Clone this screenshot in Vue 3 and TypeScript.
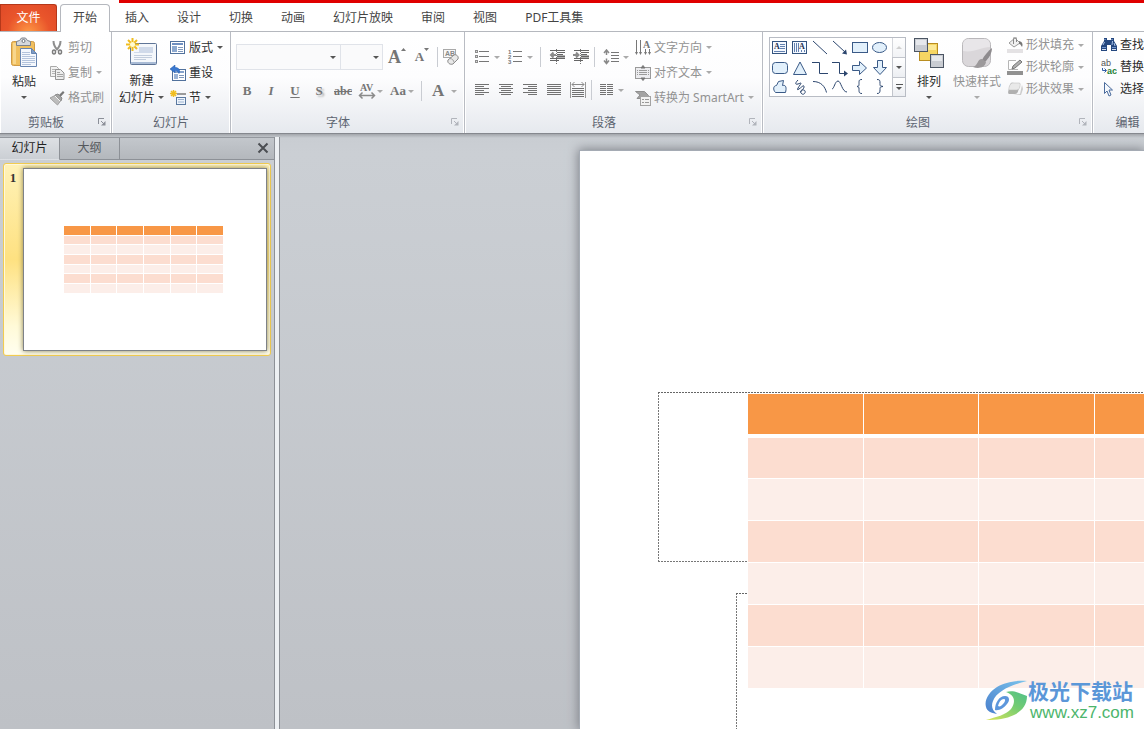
<script setup lang="ts">
import { ref } from 'vue'

const tabs: string[] = ['插入', '设计', '切换', '动画', '幻灯片放映', '审阅', '视图', 'PDF工具集']
const activePane = ref<'slides' | 'outline'>('slides')
const bodyRows = [1, 2, 3, 4, 5, 6]
const columns = 6
</script>

<template>
  <div class="app">
    <header class="tabbar">
      <div class="accent"></div>
      <nav class="tabs">
        <button class="tab file" type="button">文件</button>
        <button class="tab home" type="button">开始</button>
        <button v-for="t in tabs" :key="t" class="tab" type="button">{{ t }}</button>
      </nav>
    </header>

    <section class="ribbon">
      <!-- Clipboard -->
      <div class="group">
        <div class="body clip">
          <button class="big" type="button">
            <svg width="30" height="32" viewBox="0 0 30 32">
              <rect x="2.500" y="4.500" width="23" height="24" rx="2" fill="#f0bf5e" stroke="#cf9a45" />
              <path d="M4 6h3v21H4z" fill="#f8d68c" />
              <path d="M7.500 8.500v-4l3-1 2-2.500h4l2 2.500 3 1v4z" fill="#d5d8dd" stroke="#7d838c" />
              <circle cx="14.500" cy="4" r="1.500" fill="#fff" stroke="#6f7680" />
              <path d="M11.500 11.500h11l5 5v13h-16z" fill="#f5f8fd" stroke="#6784b0" />
              <path d="M22.500 11.500v5h5z" fill="#7e9cc6" stroke="#6784b0" />
              <path d="M13 15.500h8M13 17.500h8M13 19.500h13M13 21.500h13M13 23.500h13M13 25.500h13M13 27.500h9" stroke="#b3c3dc" />
            </svg>
            <span>粘贴</span>
            <i class="caret dark"></i>
          </button>
          <div class="list">
            <button class="row off" type="button">
              <svg width="16" height="16" viewBox="0 0 16 16">
                <path d="M4.500 1c0 4 2 7 4 9M11.500 1c0 4-2 7-4 9" fill="none" stroke="#8e8e8e" stroke-width="2" />
                <ellipse cx="5" cy="12" rx="1.500" ry="2" fill="none" stroke="#7d7d7d" stroke-width="1.500" />
                <ellipse cx="11" cy="12" rx="1.500" ry="2" fill="none" stroke="#7d7d7d" stroke-width="1.500" />
              </svg>剪切
            </button>
            <button class="row off" type="button">
              <svg width="16" height="16" viewBox="0 0 16 16">
                <path d="M1.500 1.500h6l2 2v8h-8z" fill="#f2f2f2" stroke="#a9a9a9" />
                <path d="M3 4.500h4M3 6.500h4M3 8.500h3" stroke="#b5b5b5" />
                <path d="M6.500 4.500h5l3.500 3.500v6.500h-8.500z" fill="#ededed" stroke="#939393" />
                <path d="M8 9.500h6M8 11.500h6M8 7.500h3" stroke="#a3a3a3" />
              </svg>复制<i class="caret"></i>
            </button>
            <button class="row off" type="button">
              <svg width="16" height="16" viewBox="0 0 16 16">
                <path d="M10 5l4-4 1.500 1.500-4 4.500z" fill="#777" />
                <path d="M6 5l3-1 4 4-1 3z" fill="#a5a5a5" stroke="#8a8a8a" />
                <path d="M1 8l5-2.500 5.500 5.500-3 4z" fill="#bdbdbd" stroke="#a0a0a0" />
                <path d="M6 6l5 5" stroke="#f5f5f5" />
              </svg>格式刷
            </button>
          </div>
        </div>
        <div class="title">剪贴板<button class="launch" type="button" aria-label="剪贴板选项"><svg width="8" height="8" viewBox="0 0 8 8"><path d="M.5 6V.5H6M3 3l3 3" fill="none" stroke="#8b8f98" /><path d="M7.500 3v4.500H3l4.500-4.500z" fill="#8b8f98" /></svg></button></div>
      </div>

      <!-- Slides -->
      <div class="group">
        <div class="body slides">
          <button class="big" type="button">
            <svg width="32" height="32" viewBox="0 0 32 32">
              <rect x="4.500" y="5.500" width="26" height="21" rx="1" fill="#f4f7fb" stroke="#5f7597" />
              <path d="M5 24h25v2H5z" fill="#a9bbd5" />
              <path d="M8 17.500h18M8 19.500h18M8 21.500h12" stroke="#c2cddd" />
              <path d="M13 9h14v6H8v-1h5z" fill="#d0daea" />
              <path d="M6.500 0v13M0 6.500h13M2 2l9 9M11 2l-9 9" stroke="#f0bd20" stroke-width="2" />
              <circle cx="6.500" cy="6.500" r="2.500" fill="#fffbd0" />
            </svg>
            <span>新建</span>
            <span class="line2">幻灯片<i class="caret dark"></i></span>
          </button>
          <div class="list">
            <button class="row" type="button">
              <svg width="16" height="16" viewBox="0 0 16 16">
                <rect x=".5" y="1.500" width="14" height="12" fill="#fff" stroke="#51719c" />
                <path d="M2 3h11v2H2z" fill="#6f8fc0" />
                <path d="M2 6h5v6H2z" fill="#8da9cf" />
                <path d="M8 7.500h5M8 9.500h5M8 11.500h5" stroke="#8098bb" />
              </svg>版式<i class="caret dark"></i>
            </button>
            <button class="row" type="button">
              <svg width="16" height="16" viewBox="0 0 16 16">
                <rect x="2.500" y="4.500" width="13" height="11" fill="#fff" stroke="#51719c" />
                <path d="M5 6h9v2H5z" fill="#86a3cc" />
                <path d="M4 9h4v5H4z" fill="#9cb4d6" />
                <path d="M9 10.500h5M9 12.500h5" stroke="#8098bb" />
                <path d="M0 4l5-4v2.500c4 0 5.500 2.500 4 6C8 6.500 7 5.500 5 5.500V8z" fill="#3978d0" stroke="#1c56a8" stroke-width=".5" />
              </svg>重设
            </button>
            <button class="row" type="button">
              <svg width="16" height="16" viewBox="0 0 16 16">
                <path d="M7 4h9" stroke="#9a9a9a" stroke-width="2" />
                <path d="M3.500 0v7M0 3.500h7M1 1l5 5M6 1l-5 5" stroke="#f0bd20" stroke-width="1.500" />
                <rect x="6.500" y="7.500" width="9" height="7" fill="#eef4fb" stroke="#5a789f" />
                <path d="M8 9.500h6M8 12h6" stroke="#9cb2cf" />
              </svg>节<i class="caret dark"></i>
            </button>
          </div>
        </div>
        <div class="title">幻灯片</div>
      </div>

      <!-- Font -->
      <div class="group">
        <div class="body font">
          <div class="tools first">
            <span class="combo family"><select aria-label="字体"><option></option></select><i class="caret dark"></i></span>
            <span class="combo size"><select aria-label="字号"><option></option></select><i class="caret dark"></i></span>
            <button class="ib letter grow" type="button">A<svg width="5" height="3" viewBox="0 0 5 3"><path d="M0 3L2.500 0 5 3z" fill="#777" /></svg></button>
            <button class="ib letter shrink" type="button">A<svg width="5" height="3" viewBox="0 0 5 3"><path d="M0 0h5L2.500 3z" fill="#777" /></svg></button>
            <span class="sep"></span>
            <button class="ib clear" type="button" aria-label="清除格式">
              <svg width="18" height="18" viewBox="0 0 18 18">
                <rect x="1.500" y="1.500" width="12" height="8" fill="#f7f7f7" stroke="#a9a9a9" />
                <text x="3" y="8" class="tiny">AB</text>
                <path d="M6 12l6-5c2-1 5 1 4 4l-5 5c-3 1-6-1-5-4z" fill="#e9e9e9" stroke="#8b8b8b" />
                <path d="M8 10.500c2 0 4 2 4 4" fill="none" stroke="#a0a0a0" />
              </svg>
            </button>
          </div>
          <div class="tools second">
            <button class="ib letter" type="button">B</button>
            <button class="ib letter italic" type="button">I</button>
            <button class="ib letter under" type="button">U</button>
            <button class="ib letter shadow" type="button">S</button>
            <button class="ib letter strike" type="button">abc</button>
            <button class="ib drop" type="button" aria-label="字符间距">
              <svg width="20" height="18" viewBox="0 0 20 18">
                <text x="3" y="9" class="av">AV</text>
                <path d="M2 13.500h16M5.500 10.500l-3 3 3 3M14.500 10.500l3 3-3 3" fill="none" stroke="#8a8a8a" stroke-width="1.500" />
              </svg><i class="caret"></i>
            </button>
            <button class="ib drop letter aa" type="button"><span>Aa</span><i class="caret"></i></button>
            <span class="sep"></span>
            <button class="ib drop letter color" type="button"><span>A</span><i class="caret"></i></button>
          </div>
        </div>
        <div class="title">字体<button class="launch pale" type="button" aria-label="字体选项"><svg width="8" height="8" viewBox="0 0 8 8"><path d="M.5 6V.5H6M3 3l3 3" fill="none" stroke="#8b8f98" /><path d="M7.500 3v4.500H3l4.500-4.500z" fill="#8b8f98" /></svg></button></div>
      </div>

      <!-- Paragraph -->
      <div class="group">
        <div class="body para">
          <div class="paratools">
            <div class="tools first">
              <button class="ib drop" type="button" aria-label="项目符号">
                <svg width="16" height="16" viewBox="0 0 16 16">
                  <path d="M5 2.500h10M5 7.500h10M5 12.500h10" stroke="#777" />
                  <path d="M1 1h3v3H1zM1 6h3v3H1zM1 11h3v3H1z" fill="#8d8d8d" />
                  <path d="M2 2h1v1H2zM2 7h1v1H2zM2 12h1v1H2z" fill="#ddd" />
                </svg><i class="caret"></i>
              </button>
              <button class="ib drop" type="button" aria-label="编号">
                <svg width="16" height="16" viewBox="0 0 16 16">
                  <path d="M6 2.500h9M6 7.500h9M6 12.500h9" stroke="#777" />
                  <text x="1" y="5" class="digit">1</text><text x="1" y="10" class="digit">2</text><text x="1" y="15" class="digit">3</text>
                </svg><i class="caret"></i>
              </button>
              <span class="sep"></span>
              <button class="ib" type="button" aria-label="减少缩进">
                <svg width="16" height="16" viewBox="0 0 16 16">
                  <path d="M1 1.500h15M8 3.500h8M8 5.500h6M1 9.500h15M1 11.500h9" stroke="#666" />
                  <path d="M8 7.500h8" stroke="#666" stroke-width="2" />
                  <path d="M7 6H2M4.500 3.500L2 6l2.500 2.500" fill="none" stroke="#8b8b8b" stroke-width="2" />
                  <path d="M7.500 0v15" stroke="#777" stroke-dasharray="1 1" />
                </svg>
              </button>
              <button class="ib" type="button" aria-label="增加缩进">
                <svg width="16" height="16" viewBox="0 0 16 16">
                  <path d="M1 1.500h15M8 3.500h8M8 5.500h6M1 9.500h15M1 11.500h9" stroke="#666" />
                  <path d="M8 7.500h8" stroke="#666" stroke-width="2" />
                  <path d="M0 6h5M3 3.500L5.500 6 3 8.500" fill="none" stroke="#8b8b8b" stroke-width="2" />
                  <path d="M7.500 0v15" stroke="#777" stroke-dasharray="1 1" />
                </svg>
              </button>
              <span class="sep near"></span>
              <button class="ib drop" type="button" aria-label="行距">
                <svg width="16" height="16" viewBox="0 0 16 16">
                  <path d="M8 3.500h8M8 6.500h8M8 9.500h8M8 12.500h8" stroke="#777" />
                  <path d="M3.500 1v5M1 4l2.500-3L6 4M3.500 9.500v5M1 11.500l2.500 3 2.500-3" fill="none" stroke="#888" stroke-width="1.500" />
                </svg><i class="caret"></i>
              </button>
            </div>
            <div class="tools second">
              <button class="ib" type="button" aria-label="左对齐"><svg width="14" height="12" viewBox="0 0 14 12"><path d="M0 .5h14M0 2.500h9M0 4.500h14M0 6.500h9M0 8.500h14M0 10.500h9" stroke="#727272" /></svg></button>
              <button class="ib" type="button" aria-label="居中"><svg width="14" height="12" viewBox="0 0 14 12"><path d="M0 .5h14M2 2.500h10M0 4.500h14M2 6.500h10M0 8.500h14M2 10.500h10" stroke="#727272" /></svg></button>
              <button class="ib" type="button" aria-label="右对齐"><svg width="14" height="12" viewBox="0 0 14 12"><path d="M0 .5h14M5 2.500h9M0 4.500h14M5 6.500h9M0 8.500h14M5 10.500h9" stroke="#727272" /></svg></button>
              <button class="ib" type="button" aria-label="两端对齐"><svg width="14" height="12" viewBox="0 0 14 12"><path d="M0 .5h14M0 2.500h14M0 4.500h14M0 6.500h14M0 8.500h14M0 10.500h14" stroke="#727272" /></svg></button>
              <button class="ib" type="button" aria-label="分散对齐">
                <svg width="16" height="16" viewBox="0 0 16 16">
                  <path d="M.5 0v16M15.500 0v16" stroke="#999" />
                  <path d="M2 2.500h12M4.500 0L2 2.500 4.500 5M11.500 0L14 2.500 11.500 5" fill="none" stroke="#8a8a8a" />
                  <path d="M2 6.500h12M2 8.500h12M2 10.500h12M2 12.500h12M2 14.500h12" stroke="#727272" />
                </svg>
              </button>
              <span class="sep near"></span>
              <button class="ib drop" type="button" aria-label="分栏"><svg width="14" height="12" viewBox="0 0 14 12"><path d="M0 .5h6M0 2.500h6M0 4.500h6M0 6.500h6M0 8.500h6M0 10.500h6M7 .5h6M7 2.500h6M7 4.500h6M7 6.500h6M7 8.500h6M7 10.500h6" stroke="#727272" /></svg><i class="caret"></i></button>
            </div>
          </div>
          <div class="list">
            <button class="row off" type="button">
              <svg width="16" height="16" viewBox="0 0 16 16">
                <path d="M1.500 0v13M5.500 0v13M10.500 9v5M14.500 9v5" stroke="#777" />
                <path d="M0 12h3l-1.500 3zM4 12h3l-1.500 3zM9 12h3l-1.500 3zM13 12h3l-1.500 3z" fill="#777" />
                <text x="8" y="8" class="dirA">A</text>
              </svg>文字方向<i class="caret"></i>
            </button>
            <button class="row off" type="button">
              <svg width="16" height="16" viewBox="0 0 16 16">
                <rect x=".5" y="2.500" width="15" height="11" fill="#ececef" stroke="#9a9a9a" />
                <path d="M2 5.500h12M2 7.500h12M2 9.500h12" stroke="#9a9a9a" stroke-dasharray="1 1 8 1 1 1" />
                <path d="M6 3l2-2.500L10 3zM6 13l2 2.500 2-2.500z" fill="#777" stroke="#777" />
              </svg>对齐文本<i class="caret"></i>
            </button>
            <button class="row off" type="button">
              <svg width="16" height="16" viewBox="0 0 16 16">
                <path d="M.5 1.500h9l4 4-1 3H2l3-3.500z" fill="#a3a3a3" stroke="#8f8f8f" />
                <rect x="5.500" y="6.500" width="10" height="9" fill="#f2f2f2" stroke="#a3a3a3" />
                <path d="M7 9.500h2M7 12.500h2M10 9.500h4M10 12.500h4" stroke="#999" />
              </svg>转换为 SmartArt<i class="caret"></i>
            </button>
          </div>
        </div>
        <div class="title">段落<button class="launch pale" type="button" aria-label="段落选项"><svg width="8" height="8" viewBox="0 0 8 8"><path d="M.5 6V.5H6M3 3l3 3" fill="none" stroke="#8b8f98" /><path d="M7.500 3v4.500H3l4.500-4.500z" fill="#8b8f98" /></svg></button></div>
      </div>

      <!-- Drawing -->
      <div class="group">
        <div class="body draw">
          <div class="gallery">
            <div class="shapes">
              <button type="button" aria-label="文本框"><svg viewBox="0 0 18 18"><rect x="1.500" y="2.500" width="14" height="12" fill="#f5f9ff" stroke="#34547f" /><text x="3" y="10" class="boxA">A</text><path d="M9 5.500h5M9 7.500h5M9 9.500h5M3 12.500h11" stroke="#6482b0" /></svg></button>
              <button type="button" aria-label="竖排文本框"><svg viewBox="0 0 18 18"><rect x="1.500" y="2.500" width="14" height="12" fill="#f5f9ff" stroke="#34547f" /><text x="8" y="10" class="boxA">A</text><path d="M3.500 4v9M5.500 4v9M7.500 4v9M10.500 11v2M13.500 11v2" stroke="#6482b0" /></svg></button>
              <button type="button" aria-label="直线"><svg viewBox="0 0 18 18"><path d="M2 2l14 13" stroke="#2c466e" /></svg></button>
              <button type="button" aria-label="箭头"><svg viewBox="0 0 18 18"><path d="M2 2l12 11" stroke="#2c466e" /><path d="M16 15.500l-5-1 4-4z" fill="#2c466e" /></svg></button>
              <button type="button" aria-label="矩形"><svg viewBox="0 0 18 18"><rect x="1.500" y="3.500" width="15" height="10" fill="#e2f0fb" stroke="#3a5a87" /></svg></button>
              <button type="button" aria-label="椭圆"><svg viewBox="0 0 18 18"><ellipse cx="8.500" cy="8.500" rx="7" ry="5" fill="#e2f0fb" stroke="#3a5a87" /></svg></button>
              <button type="button" aria-label="圆角矩形"><svg viewBox="0 0 18 18"><rect x="1.500" y="3.500" width="15" height="11" rx="3" fill="#e2f0fb" stroke="#3a5a87" /></svg></button>
              <button type="button" aria-label="三角形"><svg viewBox="0 0 18 18"><path d="M9 3l6.500 12.500h-13z" fill="#e2f0fb" stroke="#3a5a87" /></svg></button>
              <button type="button" aria-label="肘形连接符"><svg viewBox="0 0 18 18"><path d="M1 3.500h7.500v11H17" fill="none" stroke="#2c466e" /></svg></button>
              <button type="button" aria-label="肘形箭头"><svg viewBox="0 0 18 18"><path d="M1 3.500h7.500v11H14" fill="none" stroke="#2c466e" /><path d="M17 14.500l-4-3v6z" fill="#2c466e" /></svg></button>
              <button type="button" aria-label="右箭头"><svg viewBox="0 0 18 18"><path d="M1.500 6.500h7v-4l7 6.500-7 6.500v-4h-7z" fill="#e2f0fb" stroke="#3a5a87" /></svg></button>
              <button type="button" aria-label="下箭头"><svg viewBox="0 0 18 18"><path d="M6.500 1.500v7h-4L9 15.500l6.500-7h-4v-7z" fill="#e2f0fb" stroke="#3a5a87" /></svg></button>
              <button type="button" aria-label="任意多边形"><svg viewBox="0 0 18 18"><path d="M4.500 14.500c-3-3-2-7 1-7l2-4 5-1-1 5c4-1 4 3 3 7z" fill="#e2f0fb" stroke="#3a5a87" /></svg></button>
              <button type="button" aria-label="自由曲线"><svg viewBox="0 0 18 18"><path d="M7 2c-3 3-3 5 0 4s4-2 2 1-4 6-1 4 5-5 5-2-5 3-3 6 5 0 4-2-4-1-4 1" fill="none" stroke="#2c466e" /></svg></button>
              <button type="button" aria-label="弧形"><svg viewBox="0 0 18 18"><path d="M2 3.500c8 0 12 5 13.500 11" fill="none" stroke="#2c466e" /></svg></button>
              <button type="button" aria-label="曲线"><svg viewBox="0 0 18 18"><path d="M1 11c2 0 3-8 6-8s4 11 9 11" fill="none" stroke="#2c466e" /></svg></button>
              <button type="button" aria-label="左大括号"><svg viewBox="0 0 18 18"><path d="M11 1.500c-3 0-3 1-3 4s0 2-2 3c2 .5 2 .5 2 3s0 4 3 4" fill="none" stroke="#2c466e" /></svg></button>
              <button type="button" aria-label="右大括号"><svg viewBox="0 0 18 18"><path d="M6 1.500c3 0 3 1 3 4s0 2 3 3c-3 .5-3 .5-3 3s0 4-3 4" fill="none" stroke="#2c466e" /></svg></button>
            </div>
            <div class="scroll">
              <button type="button" class="faded" aria-label="上一行"><i class="caret up"></i></button>
              <button type="button" aria-label="下一行"><i class="caret dark"></i></button>
              <button type="button" aria-label="更多形状"><i class="bar"></i><i class="caret dark"></i></button>
            </div>
          </div>
          <button class="big arrange" type="button">
            <svg width="32" height="32" viewBox="0 0 32 32">
              <rect x="6.500" y="6.500" width="18" height="17" fill="#f6d663" stroke="#b98d20" />
              <path d="M15 8h8v5h-8z" fill="#fbe998" />
              <rect x="1.500" y="1.500" width="13" height="13" fill="#c9ccd2" stroke="#4b5563" />
              <path d="M3 3h10v5H3z" fill="#e6e8ec" />
              <rect x="17.500" y="17.500" width="13" height="13" fill="#c9ccd2" stroke="#4b5563" />
              <path d="M19 19h10v5H19z" fill="#e6e8ec" />
            </svg>
            <span>排列</span>
            <i class="caret dark"></i>
          </button>
          <button class="big quick off" type="button">
            <svg width="32" height="32" viewBox="0 0 32 32">
              <rect x="1.500" y="1.500" width="28" height="28" rx="6" fill="#dad7da" stroke="#b9b7ba" />
              <path d="M2 14V8c0-4 2-6 6-6h15c4 0 6 2 6 6v2c-9 0-16 6-27 4z" fill="#e8e6e9" />
              <path d="M31 11c-4 3-8 8-10 12l3 2c4-4 7-9 7-14z" fill="#8e8b8e" />
              <path d="M21 22c-5 0-4 7-9 8 5 2 12 1 13-5z" fill="#9c999b" />
            </svg>
            <span>快速样式</span>
            <i class="caret"></i>
          </button>
          <div class="list tight">
            <button class="row off" type="button">
              <svg width="16" height="16" viewBox="0 0 16 16">
                <path d="M2 6l6-5 5 5-6 4z" fill="#f0f0f0" stroke="#9a9a9a" />
                <path d="M6.500 7V1.500c0-2 3-2 3 0V5" fill="none" stroke="#888" />
                <path d="M12 4c4 1 4 4 3 6-1-1-1-3-3-3z" fill="#777" />
                <path d="M0 12h16v4H0z" fill="#e4e2e4" />
              </svg>形状填充<i class="caret"></i>
            </button>
            <button class="row off" type="button">
              <svg width="16" height="16" viewBox="0 0 16 16">
                <path d="M9 1.500H1.500v9H11" fill="none" stroke="#b5b5b5" />
                <path d="M5 10l1-3 7-6 2 2-7 6z" fill="#b0b0b0" stroke="#777" />
                <path d="M0 12h16v4H0z" fill="#919191" />
              </svg>形状轮廓<i class="caret"></i>
            </button>
            <button class="row off" type="button">
              <svg width="16" height="16" viewBox="0 0 16 16">
                <path d="M6 14l7-1 2-9 1 4-2 6z" fill="#ccc" />
                <path d="M3 4c1-3 2-2 4-2h4c3 0 2 2 1 5s-1 6-4 6H3c-3 0-2-2 0-9z" fill="#b0b0b0" />
                <path d="M3 4c1-2 2-2 4-2h5c2 0 1 2 1 3s-1 4-3 4H3c-2 0-1-3 0-5z" fill="#e9e9e9" stroke="#bbb" stroke-width=".5" />
              </svg>形状效果<i class="caret"></i>
            </button>
          </div>
        </div>
        <div class="title">绘图<button class="launch pale" type="button" aria-label="绘图选项"><svg width="8" height="8" viewBox="0 0 8 8"><path d="M.5 6V.5H6M3 3l3 3" fill="none" stroke="#8b8f98" /><path d="M7.500 3v4.500H3l4.500-4.500z" fill="#8b8f98" /></svg></button></div>
      </div>

      <!-- Editing -->
      <div class="group">
        <div class="body edit">
          <div class="list tight">
            <button class="row" type="button">
              <svg width="16" height="16" viewBox="0 0 16 16">
                <path d="M3 1h3v2h4V1h3v3l3 5v5h-6V8H6v6H0V9l3-5z" fill="#24477f" />
                <path d="M3.500 5L2 8M11.500 4L11 8M4 2v1M11 2v1M13 6l1 3" stroke="#a8c3ea" />
                <path d="M1 10.500h4M11 10.500h4" stroke="#6f93cc" />
                <path d="M1 12h4v1H1zM11 12h4v1h-4z" fill="#d3e0f4" />
              </svg>查找
            </button>
            <button class="row" type="button">
              <svg width="16" height="16" viewBox="0 0 16 16">
                <text x="0" y="7" class="rep-a">ab</text>
                <text x="6" y="15" class="rep-b">ac</text>
                <path d="M1.500 9v2.500H5M3.500 9.500l2 2-2 2" fill="none" stroke="#2f5da8" />
              </svg>替换
            </button>
            <button class="row" type="button">
              <svg width="16" height="16" viewBox="0 0 16 16">
                <path d="M3.500 1.500v11l2.500-2.500 2 5 2-1-2-5h3.500z" fill="#f4f8fd" stroke="#4a6b9c" />
              </svg>选择
            </button>
          </div>
        </div>
        <div class="title">编辑</div>
      </div>
    </section>

    <main class="work">
      <aside class="pane">
        <div class="pane-tabs">
          <button type="button" :class="{ on: activePane === 'slides' }" @click="activePane = 'slides'">幻灯片</button>
          <button type="button" :class="{ on: activePane === 'outline' }" @click="activePane = 'outline'">大纲</button>
          <button class="close" type="button" aria-label="关闭">
            <svg width="12" height="12" viewBox="0 0 12 12"><path d="M1.500 1.500l9 9M10.500 1.500l-9 9" stroke="#4b4e52" stroke-width="2" /></svg>
          </button>
        </div>
        <div class="thumb">
          <span class="num">1</span>
          <div class="preview">
            <table class="mini">
              <thead><tr><th v-for="c in columns" :key="c"></th></tr></thead>
              <tbody><tr v-for="r in bodyRows" :key="r"><td v-for="c in columns" :key="c"></td></tr></tbody>
            </table>
          </div>
        </div>
      </aside>
      <div class="splitter"></div>
      <section class="canvas">
        <div class="slide">
          <div class="holder upper"></div>
          <div class="holder lower"></div>
          <table class="grid">
            <thead><tr><th v-for="c in columns" :key="c"></th></tr></thead>
            <tbody><tr v-for="r in bodyRows" :key="r"><td v-for="c in columns" :key="c"></td></tr></tbody>
          </table>
        </div>
      </section>
      <div class="mark">
        <svg width="42" height="42" viewBox="0 0 42 42">
          <defs>
            <linearGradient id="sky" x1="0" y1="1" x2="1" y2="0"><stop offset="0" stop-color="#4a80cd" /><stop offset="1" stop-color="#7cc4ec" /></linearGradient>
            <linearGradient id="leaf" x1="0" y1="1" x2="1" y2="0"><stop offset="0" stop-color="#dbe65a" /><stop offset=".6" stop-color="#74cc72" /><stop offset="1" stop-color="#4fc08a" /></linearGradient>
          </defs>
          <path d="M42 1C33 0 20 2 12 7 4 12-1 20 1 27c1 4 5 6 11 7-5-4-6-8-4-13C12 11 26 5 42 1z" fill="url(#sky)" />
          <path d="M21 12c8-2 12 1 21 4 0 9-5 15-13 19-8 4-17 5-28 5 10-3 20-5 25-11 5-7 4-14-5-17z" fill="url(#leaf)" />
          <path d="M10 30c0-7 4-14 10-14 5 0 5 5 2 8-3 4-8 7-12 6z" fill="#5d97dc" />
          <path d="M13 26c1-4 3-7 6-7 2 0 1 3-1 5s-3 3-5 2z" fill="#fff" />
        </svg>
        <div class="mark-text"><strong>极光下载站</strong><span>www.xz7.com</span></div>
      </div>
    </main>
  </div>
</template>

<style>
html,
body,
#app {
  height: 100%;
}
body {
  margin: 0;
  overflow: hidden;
}
</style>

<style scoped>
.app {
  display: flex;
  flex-direction: column;
  height: 100%;
  overflow: hidden;
  font: 12px/16px 'Noto Sans', 'Noto Sans CJK SC', sans-serif;
  color: #2c2c2c;
  background: #fff;
}
button {
  font: inherit;
  color: inherit;
  padding: 0;
  margin: 0;
  border: 0;
  background: none;
  white-space: nowrap;
}
svg {
  display: block;
  flex: none;
}

/* Tabs */
.tabbar {
  flex: none;
  border-bottom: 1px solid #b5b8be;
}
.accent {
  height: 3px;
  margin-left: 119px;
  background: #e00000;
}
.tabs {
  display: flex;
  height: 28px;
}
.tab {
  padding: 1px 14px 0;
  color: #444;
}
.tab.file {
  width: 57px;
  margin: 1px 3px 0 0;
  padding: 0;
  color: #fff;
  border: 1px solid #b5381a;
  border-bottom: 0;
  border-radius: 0 3px 0 0;
  background: radial-gradient(ellipse at 50% 110%, #ff9a45 0%, #e9552b 55%, #e04a28 100%);
}
.tab.home {
  margin: 1px 1px -1px 0;
  padding: 0 12px 2px;
  border: 1px solid #b5b8be;
  border-bottom: 0;
  border-radius: 4px 4px 0 0;
  background: #fff;
}

/* Ribbon */
.ribbon {
  flex: none;
  display: grid;
  grid-template-columns: 112px 119px 234px 298px 330px 70px;
  background: linear-gradient(#fff 0%, #fdfdfe 45%, #e6e9ee 100%);
  border-bottom: 1px solid #85888e;
}
.group {
  box-sizing: border-box;
  display: flex;
  flex-direction: column;
  border-right: 1px solid #b9bcc3;
  box-shadow: inset -1px 0 #fff, inset 1px 0 #fff;
}
.body {
  display: flex;
  height: 79px;
}
.title {
  position: relative;
  text-align: center;
  height: 22px;
  line-height: 24px;
  color: #5c6470;
  padding-right: 19px;
}
.group:nth-child(2) .title,
.group:nth-child(6) .title {
  padding-right: 0;
}
.launch {
  position: absolute;
  right: 5px;
  top: 7px;
}
.pale {
  opacity: 0.6;
}
.caret {
  display: inline-block;
  flex: none;
  border: 3px solid transparent;
  border-top-color: #aaa;
  border-bottom: 0;
}
.caret.dark {
  border-top-color: #555;
}
.caret.up {
  border-top: 0;
  border-bottom: 3px solid #bbb;
}
.off {
  color: #929292;
}
.big {
  display: flex;
  flex-direction: column;
  align-items: center;
  flex: none;
}
.big > span {
  line-height: 17px;
}
.list {
  display: flex;
  flex-direction: column;
  padding-top: 3px;
}
.row {
  display: flex;
  align-items: center;
  height: 25px;
  gap: 3px;
}
.row .caret {
  margin-left: 1px;
}
.tight {
  padding-top: 2px;
}
.tight .row {
  height: 22px;
}
.clip .big {
  padding: 5px 10px 0 9px;
}
.clip .big span,
.draw .big span {
  margin: 4px 0 6px;
}
.slides .big {
  padding: 6px 6px 0 7px;
}
.slides .big > span:first-of-type {
  margin-top: 2px;
}
.line2 {
  display: flex;
  align-items: center;
  gap: 3px;
}

/* Font and paragraph tools */
.tools {
  display: flex;
  align-items: center;
}
.font {
  flex-direction: column;
  padding-left: 5px;
}
.font .first {
  padding-top: 12px;
  height: 26px;
}
.font .second {
  height: 24px;
  margin: 9px 0 0 -1px;
}
.combo {
  position: relative;
  box-sizing: border-box;
  height: 26px;
  border: 1px solid #e0e3e9;
  background: #fafafb;
}
.combo.family {
  width: 105px;
}
.combo.size {
  width: 43px;
  margin-left: -1px;
}
.combo select {
  width: 100%;
  height: 100%;
  border: 0;
  background: none;
  appearance: none;
}
.combo .caret {
  position: absolute;
  right: 4px;
  top: 11px;
  pointer-events: none;
}
.combo.size .caret {
  right: 3px;
}
.ib {
  display: flex;
  align-items: center;
  justify-content: center;
  width: 24px;
  height: 24px;
  flex: none;
}
.ib.drop {
  width: 33px;
  justify-content: flex-start;
  padding-left: 2px;
}
.para .ib.drop {
  padding-left: 4px;
}
.para .ib.drop .caret {
  margin-left: 4px;
}
.letter {
  font: bold 13px/16px 'Liberation Serif', serif;
  color: #757575;
}
.grow,
.shrink {
  align-items: flex-start;
  line-height: 24px;
}
.grow {
  width: 28px;
  font-size: 18px;
}
.shrink {
  width: 22px;
  font-size: 13px;
}
.grow svg,
.shrink svg {
  margin-top: 3px;
}
.clear {
  margin-left: -3px;
}
.italic {
  font-style: italic;
}
.under {
  text-decoration: underline;
  text-underline-offset: 2px;
}
.shadow {
  text-shadow: 2px 2px 2px #aaa;
}
.strike {
  font-size: 12px;
  text-decoration: line-through;
}
.font .second .ib.drop {
  width: 31px;
}
.aa span {
  width: 18px;
  margin: 0 1px;
}
.font .second .ib.color {
  font-size: 17px;
  padding-left: 6px;
}
.color .caret {
  margin-left: 7px;
}
.sep {
  width: 1px;
  height: 20px;
  margin: 0 4px;
  background: #c9ccd2;
}
.tiny {
  font: bold 7px 'Liberation Sans', sans-serif;
  fill: #888;
}
.av {
  font: bold 10px 'Liberation Serif', serif;
  fill: #757575;
}
.digit {
  font: bold 6px 'Liberation Sans', sans-serif;
  fill: #777;
}
.dirA {
  font: bold 10px 'Liberation Serif', serif;
  fill: #777;
}
.para {
  padding-left: 5px;
}
.paratools {
  width: 165px;
}
.para .first {
  height: 24px;
  margin-top: 13px;
}
.para .second {
  height: 24px;
  margin-top: 9px;
}
.para .near {
  margin: 0 4px 0 1px;
}

/* Drawing */
.draw {
  padding-left: 6px;
}
.gallery {
  display: flex;
  box-sizing: border-box;
  height: 60px;
  margin-top: 5px;
  border: 1px solid #b8bcc4;
  background: #fff;
}
.shapes {
  display: grid;
  grid-template-columns: repeat(6, 20px);
  grid-template-rows: 20px 20px 18px;
  width: 122px;
}
.shapes button {
  display: grid;
  place-items: center;
}
.shapes svg {
  width: 18px;
  height: 18px;
}
.boxA {
  font: bold 8px 'Liberation Serif', serif;
  fill: #1c2f50;
}
.scroll {
  display: grid;
  grid-template-rows: 1fr 1fr 1fr;
  width: 13px;
}
.scroll button {
  display: flex;
  flex-direction: column;
  align-items: center;
  justify-content: center;
  gap: 2px;
  border-left: 1px solid #c2c5cc;
  background: linear-gradient(#fff, #eceef2);
}
.scroll button + button {
  border-top: 1px solid #c2c5cc;
}
.faded {
  opacity: 0.7;
}
.bar {
  width: 7px;
  height: 1px;
  background: #555;
}
.draw .big {
  padding-top: 5px;
}
.arrange {
  width: 46px;
}
.quick {
  width: 50px;
}
.draw .list {
  padding-left: 5px;
}
.edit {
  padding-left: 8px;
}
.rep-a {
  font: 9px 'Liberation Sans', sans-serif;
  fill: #555;
}
.rep-b {
  font: bold 9px 'Liberation Sans', sans-serif;
  fill: #1f8034;
}

/* Work area */
.work {
  position: relative;
  flex: 1;
  min-height: 0;
  display: flex;
  overflow: hidden;
  padding-top: 3px;
  background: linear-gradient(#a3a6ab, #c9cdd2 4px, #cbcfd4 20px, #bec1c6);
}
.pane {
  box-sizing: border-box;
  width: 275px;
  flex: none;
  border-right: 1px solid #8d9197;
}
.pane-tabs {
  display: flex;
  box-sizing: border-box;
  height: 23px;
  border-top: 1px solid #94989e;
  background: linear-gradient(#c3c7cc, #b3b7bc);
}
.pane-tabs button {
  box-sizing: border-box;
  width: 60px;
  padding-bottom: 1px;
  color: #55585d;
  border-right: 1px solid #8d9197;
  border-bottom: 1px solid #8d9197;
}
.pane-tabs .on {
  color: #222;
  border-bottom-color: transparent;
  background: linear-gradient(#dde0e4, #cbcfd4);
}
.pane-tabs .close {
  display: flex;
  flex: 1;
  align-items: center;
  justify-content: flex-end;
  padding-right: 5px;
  border-right: 0;
}
.thumb {
  display: flex;
  gap: 6px;
  margin: 3px 3px 0;
  padding: 4px 3px 4px 5px;
  border: 1px solid #f2cc50;
  border-radius: 3px;
  box-shadow: inset 0 0 0 1px #fff8dc;
  background: linear-gradient(#fff2b8, #fee181 50%, #fffad8 85%, #fffef0);
}
.num {
  width: 8px;
  padding-top: 2px;
  text-align: center;
  font: bold 13px/16px 'Liberation Serif', serif;
  color: #333;
}
.preview {
  flex: 1;
  box-sizing: border-box;
  aspect-ratio: 4 / 3;
  padding: 57px 42px 0 40px;
  border: 1px solid #7e8288;
  background: #fff;
  box-shadow: 0 0 5px #8a8150;
}
table {
  table-layout: fixed;
  border-spacing: 0;
}
th,
td {
  padding: 0;
  border-right: 1px solid #fff;
  border-bottom: 1px solid #fff;
}
th {
  background: #f89746;
}
tbody tr:nth-child(odd) td {
  background: #fcddd0;
}
tbody tr:nth-child(even) td {
  background: #fceee9;
}
.mini {
  width: 100%;
}
.mini th,
.mini td {
  height: 9px;
}
.mini tr:nth-child(3n + 1) td {
  height: 8px;
}
.splitter {
  box-sizing: border-box;
  width: 5px;
  flex: none;
  border-right: 1px solid #8d9197;
  background: #edf0f3;
}
.canvas {
  flex: 1;
  min-width: 0;
  display: flex;
  overflow: hidden;
  padding: 13px 0 0 299px;
}
.slide {
  position: relative;
  flex: 1;
  border: 1px solid #a5abb4;
  border-right: 0;
  border-bottom: 0;
  background: #fff;
  box-shadow: 0 0 10px 1px #7f838a;
  overflow: hidden;
}
.holder {
  position: absolute;
  background:
    repeating-linear-gradient(90deg, #666 0 2px, #fff 2px 3px) top / 100% 1px no-repeat,
    repeating-linear-gradient(90deg, #777 0 2px, #fff 2px 3px) bottom / 100% 1px no-repeat,
    repeating-linear-gradient(#777 0 2px, #fff 2px 3px) left / 1px 100% no-repeat;
}
.upper {
  left: 78px;
  right: 0;
  top: 241px;
  height: 170px;
}
.lower {
  left: 156px;
  right: 0;
  top: 442px;
  bottom: -10px;
}
.grid {
  position: absolute;
  left: 168px;
  top: 243px;
  width: 694px;
}
.grid th,
.grid td {
  box-sizing: border-box;
  height: 42px;
}
.grid th {
  height: 44px;
  border-bottom-width: 4px;
}
.grid tbody tr:first-child td {
  height: 41px;
}
.mark {
  position: absolute;
  right: 10px;
  bottom: 7px;
  display: flex;
  align-items: center;
  gap: 1px;
}
.mark-text {
  display: flex;
  flex-direction: column;
}
.mark-text strong {
  font-size: 21px;
  line-height: 22px;
  color: #5b97d8;
}
.mark-text span {
  padding: 2px 0 0 2px;
  font: 17px/18px 'Liberation Sans', sans-serif;
  color: #4cb56c;
}
</style>
